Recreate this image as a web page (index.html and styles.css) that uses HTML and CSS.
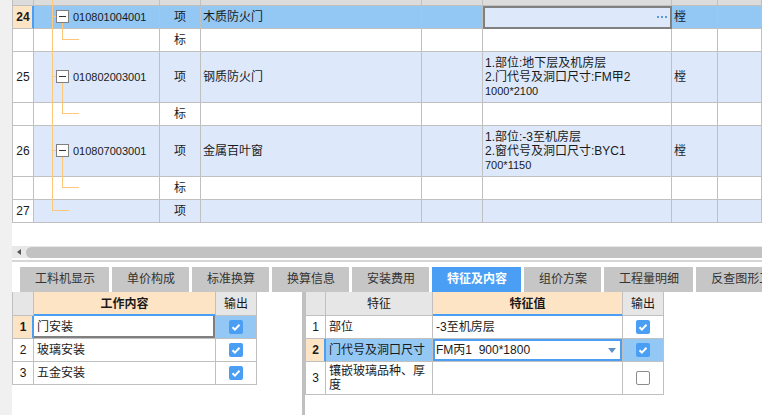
FILE: index.html
```html
<!DOCTYPE html>
<html>
<head>
<meta charset="utf-8" />
<title>清单编辑</title>
<link rel="stylesheet" href="styles.css">
</head>
<body>
<div class="app">
<div class="gutter"></div>
<div class="main">
	<div class="gridArea">
		<div class="grid">
			<div class="row head"><div></div><div></div><div></div><div></div><div></div><div></div><div></div><div></div></div>
			<div class="row sel">
				<div class="num cur">24</div><div class="code">010801004001</div><div class="unit">项</div><div class="name">木质防火门</div><div></div>
				<div class="feat editing"><span class="dots"></span></div><div class="qty">樘</div><div></div>
			</div>
			<div class="row"><div class="num"></div><div></div><div class="unit">标</div><div></div><div></div><div></div><div></div><div></div></div>
			<div class="row tall alt">
				<div class="num">25</div><div class="code">010802003001</div><div class="unit">项</div><div class="name">钢质防火门</div><div></div>
				<div class="feat"><div class="lines">1.部位:地下层及机房层<br>2.门代号及洞口尺寸:FM甲2<br><span class="small">1000*2100</span></div></div>
				<div class="qty">樘</div><div></div>
			</div>
			<div class="row"><div class="num"></div><div></div><div class="unit">标</div><div></div><div></div><div></div><div></div><div></div></div>
			<div class="row tall alt">
				<div class="num">26</div><div class="code">010807003001</div><div class="unit">项</div><div class="name">金属百叶窗</div><div></div>
				<div class="feat"><div class="lines">1.部位:-3至机房层<br>2.窗代号及洞口尺寸:BYC1<br><span class="small">700*1150</span></div></div>
				<div class="qty">樘</div><div></div>
			</div>
			<div class="row"><div class="num"></div><div></div><div class="unit">标</div><div></div><div></div><div></div><div></div><div></div></div>
			<div class="row alt"><div class="num">27</div><div></div><div class="unit">项</div><div></div><div></div><div></div><div></div><div></div></div>
		</div>
		<!-- tree connectors drawn over the code column -->
		<svg class="tree" width="750" height="223" viewBox="0 0 750 223">
			<g fill="none" stroke="#ffc878" stroke-width="1">
				<path d="M40.5 0V210.5H57"/>
				<path d="M40.5 16.5H44M50.5 23V39.5H67"/>
				<path d="M40.5 76.5H44M50.5 83V113.5H67"/>
				<path d="M40.5 150.5H44M50.5 157V187.5H67"/>
			</g>
			<g fill="#fff" stroke="#808080">
				<rect x="44.5" y="10.5" width="12" height="12"/>
				<rect x="44.5" y="70.5" width="12" height="12"/>
				<rect x="44.5" y="144.5" width="12" height="12"/>
			</g>
			<g stroke="#333">
				<path d="M47 16.5H54M47 76.5H54M47 150.5H54"/>
			</g>
		</svg>
		<div class="hscroll"><div class="arrow"><span></span></div><div class="thumb"></div></div>
	</div>
	<div class="divider"></div>
	<div class="tabs">
		<div class="tab">工料机显示</div>
		<div class="tab">单价构成</div>
		<div class="tab">标准换算</div>
		<div class="tab">换算信息</div>
		<div class="tab">安装费用</div>
		<div class="tab on">特征及内容</div>
		<div class="tab">组价方案</div>
		<div class="tab">工程量明细</div>
		<div class="tab last">反查图形工程量</div>
	</div>
	<div class="panes">
		<div class="tbl left">
			<div class="row head"><div></div><div class="hcur">工作内容</div><div>输出</div></div>
			<div class="row">
				<div class="num cur">1</div><div class="txt editing">门安装</div>
				<div class="out on"><span class="chk"><svg width="14" height="14" viewBox="0 0 14 14"><path d="M3.5 7.2l2.4 2.4 4.6-4.8" fill="none" stroke="#fff" stroke-width="2"/></svg></span></div>
			</div>
			<div class="row">
				<div class="num">2</div><div class="txt">玻璃安装</div>
				<div class="out"><span class="chk"><svg width="14" height="14" viewBox="0 0 14 14"><path d="M3.5 7.2l2.4 2.4 4.6-4.8" fill="none" stroke="#fff" stroke-width="2"/></svg></span></div>
			</div>
			<div class="row">
				<div class="num">3</div><div class="txt">五金安装</div>
				<div class="out"><span class="chk"><svg width="14" height="14" viewBox="0 0 14 14"><path d="M3.5 7.2l2.4 2.4 4.6-4.8" fill="none" stroke="#fff" stroke-width="2"/></svg></span></div>
			</div>
		</div>
		<div class="splitter"></div>
		<div class="tbl right">
			<div class="row head"><div></div><div>特征</div><div class="hcur">特征值</div><div>输出</div></div>
			<div class="row">
				<div class="num">1</div><div class="txt">部位</div><div class="txt">-3至机房层</div>
				<div class="out"><span class="chk"><svg width="14" height="14" viewBox="0 0 14 14"><path d="M3.5 7.2l2.4 2.4 4.6-4.8" fill="none" stroke="#fff" stroke-width="2"/></svg></span></div>
			</div>
			<div class="row">
				<div class="num cur">2</div><div class="txt on">门代号及洞口尺寸</div>
				<div class="txt combo">FM丙1&nbsp; 900*1800<span class="caret"></span></div>
				<div class="out on"><span class="chk"><svg width="14" height="14" viewBox="0 0 14 14"><path d="M3.5 7.2l2.4 2.4 4.6-4.8" fill="none" stroke="#fff" stroke-width="2"/></svg></span></div>
			</div>
			<div class="row tall">
				<div class="num">3</div><div class="txt wrap">镶嵌玻璃品种、厚度</div><div class="txt"></div>
				<div class="out"><span class="chk off"></span></div>
			</div>
		</div>
	</div>
</div>
</div>
</body>
</html>
```

FILE: styles.css
```css
html, body {
	margin: 0;
	padding: 0;
	width: 762px;
	height: 415px;
	overflow: hidden;
	background: #fff;
}
body {
	font-family: "Liberation Sans", "Noto Sans CJK SC", sans-serif;
	font-size: 12px;
	color: #1a1a1a;
}
div.app {
	display: flex;
	height: 415px;
}
div.gutter {
	width: 12px;
	flex: none;
	background: #f0f0f0;
}
div.main {
	flex: 1;
	min-width: 0;
	overflow: hidden;
	display: flex;
	flex-direction: column;
}

/* top grid */
div.gridArea {
	position: relative;
}
div.grid {
	border-left: 1px solid #c0c0c0;
}
div.grid div.row {
	display: grid;
	grid-template-columns: 21px 126px 41px 221px 61px 189px 46px 44px;
	height: 23px;
}
div.grid div.row > div {
	border-right: 1px solid #c0c0c0;
	border-bottom: 1px solid #c0c0c0;
	box-sizing: border-box;
	display: flex;
	align-items: center;
	padding: 0 2px;
	line-height: 14px;
	white-space: nowrap;
	overflow: hidden;
}
div.grid div.row.head {
	height: 6px;
}
div.grid div.row.head > div {
	background: #dcdcdc;
}
div.grid div.row.tall {
	height: 51px;
}
div.grid div.row.alt > div {
	background: #dde9fb;
}
div.grid div.row.sel > div {
	background: #93c8f5;
}
div.grid div.row > div.num {
	justify-content: center;
	background: #fff;
}
div.grid div.row > div.num.cur {
	background: #fde4c4;
	font-weight: bold;
	border-right-color: #4a9ff5;
	box-shadow: inset -1px 0 0 #4a9ff5;
}
div.grid div.row > div.code {
	padding-left: 39px;
	font-size: 11px;
}
div.grid div.row > div.unit {
	justify-content: center;
}
div.grid div.row > div.editing {
	background: #dde9fb;
	outline: 2px solid #808080;
	outline-offset: -2px;
	justify-content: flex-end;
	padding-right: 4px;
}
span.dots {
	width: 10px;
	height: 2px;
	margin-bottom: 1px;
	background: linear-gradient(90deg, #5b9bd5 2px, transparent 2px) 0 0 / 4px 2px repeat-x;
}
div.lines {
	line-height: 14px;
}
span.small {
	font-size: 11px;
}
svg.tree {
	position: absolute;
	left: 0;
	top: 0;
	pointer-events: none;
	shape-rendering: crispEdges;
}

/* scrollbar */
div.hscroll {
	margin-top: 23px;
	height: 12px;
	display: flex;
	background: #e8e8e8;
}
div.hscroll div.arrow {
	width: 14px;
	display: flex;
	align-items: center;
	justify-content: center;
}
div.hscroll div.arrow span {
	border-top: 3px solid transparent;
	border-bottom: 3px solid transparent;
	border-right: 4px solid #555;
}
div.hscroll div.thumb {
	flex: 1;
	margin-top: 1px;
	background: #c2c2c2;
	border-radius: 6px 0 0 6px;
}
div.divider {
	margin-top: 2px;
	height: 2px;
	background: #d6d6d6;
}

/* tabs */
div.tabs {
	display: flex;
	gap: 3px;
	padding-left: 8px;
	margin-top: 5px;
	height: 25px;
}
div.tab {
	flex: none;
	padding: 0 14px 0 15px;
	line-height: 25px;
	background: #c6c6c6;
	color: #333;
}
div.tab.on {
	background: #4a9ff5;
	color: #fff;
	font-weight: bold;
}
div.tab.last {
	flex: 1;
	min-width: 0;
	white-space: nowrap;
	overflow: hidden;
}

/* lower panes */
div.panes {
	flex: 1;
	display: flex;
}
div.tbl {
	align-self: flex-start;
	border-left: 1px solid #c0c0c0;
}
div.tbl.left {
	margin-right: 45px;
}
div.splitter {
	width: 3px;
	flex: none;
	background: #c0c0c0;
}
div.tbl div.row {
	display: grid;
	height: 23px;
}
div.tbl.left div.row {
	grid-template-columns: 21px 182px 41px;
}
div.tbl.right div.row {
	grid-template-columns: 20px 107px 190px 41px;
}
div.tbl div.row > div {
	border-right: 1px solid #c0c0c0;
	border-bottom: 1px solid #c0c0c0;
	box-sizing: border-box;
	display: flex;
	align-items: center;
	padding: 0 2px;
	line-height: 14px;
	white-space: nowrap;
	overflow: hidden;
}
div.tbl div.row.head {
	height: 24px;
}
div.tbl div.row.head > div {
	background: #e6e6e6;
	justify-content: center;
}
div.tbl div.row.head > div.hcur {
	background: #fde4c4;
	font-weight: bold;
	border-bottom-color: #4a9ff5;
	box-shadow: inset 0 -1px 0 #4a9ff5;
}
div.tbl div.row.tall {
	height: 33px;
}
div.tbl div.row > div.num {
	justify-content: center;
}
div.tbl div.row > div.num.cur {
	background: #fde4c4;
	font-weight: bold;
	border-right-color: #4a9ff5;
	box-shadow: inset -1px 0 0 #4a9ff5;
}
div.tbl div.row > div.txt {
	padding-left: 3px;
}
div.tbl div.row > div.wrap {
	white-space: normal;
	padding-right: 0;
}
div.tbl div.row > div.on {
	background: #93c8f5;
}
div.tbl div.row > div.editing {
	box-shadow: inset -2px -2px 0 #7f7f7f;
}
div.tbl div.row > div.combo {
	box-shadow: inset 0 0 0 2px #4a9ff5;
	padding-right: 6px;
}
span.caret {
	margin-left: auto;
	border-left: 4px solid transparent;
	border-right: 4px solid transparent;
	border-top: 5px solid #5d8fcc;
}
div.tbl div.row > div.out {
	justify-content: center;
}
span.chk {
	width: 14px;
	height: 14px;
	border-radius: 2px;
	background: #4a9ff5;
	display: block;
}
span.chk svg {
	display: block;
}
span.chk.off {
	width: 12px;
	height: 12px;
	background: #fff;
	border: 1px solid #8c8c8c;
}
```
